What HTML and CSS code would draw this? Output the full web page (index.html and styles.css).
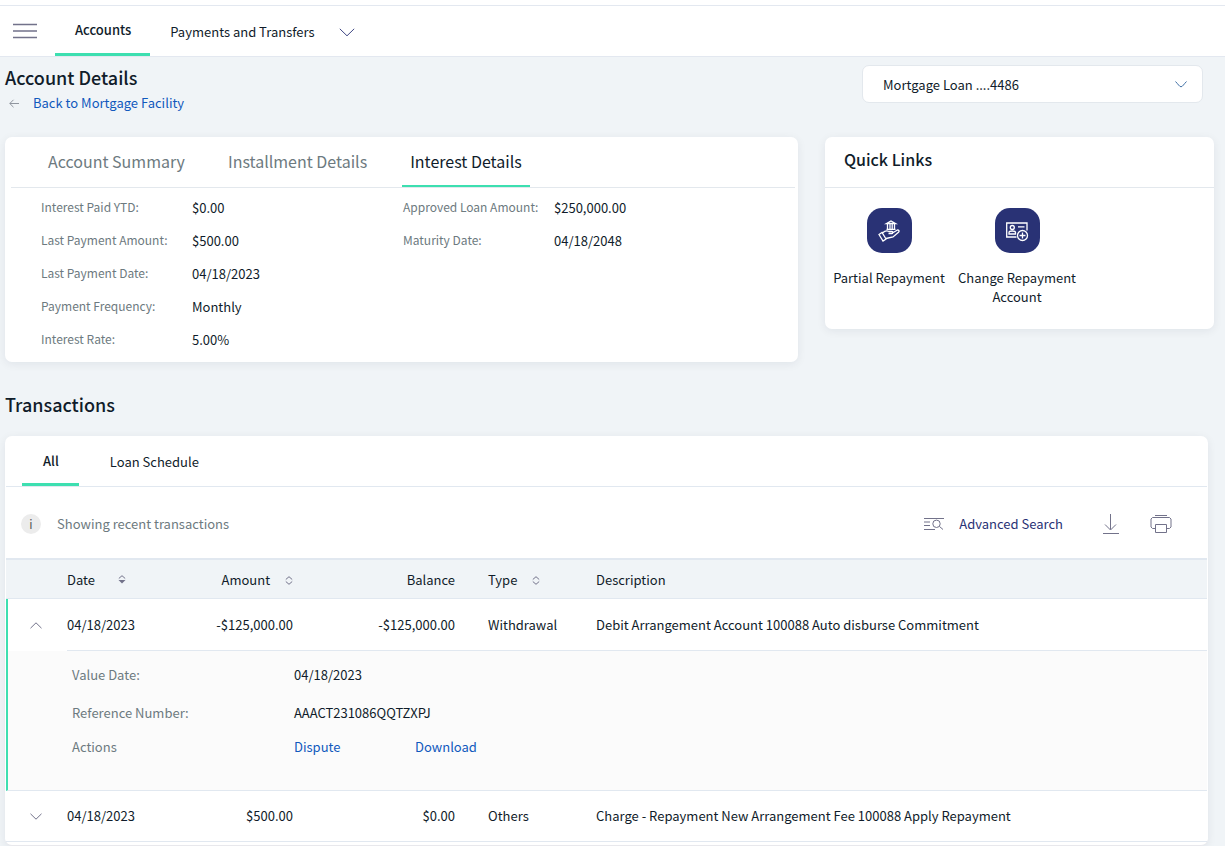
FILE: index.html
```html
<!DOCTYPE html>
<html lang="en">
<head>
    <meta charset="UTF-8">
    <meta name="viewport" content="width=device-width, initial-scale=1">
    <title>Account Details</title>
    <link rel="stylesheet" href="styles.css">
</head>
<body>
<header class="topbar">
    <button type="button" class="menu-btn" aria-label="Menu">
        <svg width="24" height="16" viewBox="0 0 24 16"><path d="M0 1.5h24M0 8h24M0 14.5h24"/></svg>
    </button>
    <nav class="main-nav">
        <a href="#" class="nav-item active">Accounts</a>
        <a href="#" class="nav-item">Payments and Transfers
            <svg width="16" height="9" viewBox="0 0 16 9"><path d="M.8.8L8 7.800 15.200.8"/></svg>
        </a>
    </nav>
</header>

<main class="page">
    <div class="page-head">
        <div>
            <h1>Account Details</h1>
            <a href="#" class="back">
                <svg width="10" height="9" viewBox="0 0 10 9"><path d="M10 4.500H.8M4.500.8L.8 4.500l3.700 3.700"/></svg>
                Back to Mortgage Facility
            </a>
        </div>
        <div class="account-select">
            <select aria-label="Account">
                <option>Mortgage Loan ....4486</option>
            </select>
            <svg width="12" height="7" viewBox="0 0 12 7"><path d="M.5.5C3 3 4.500 5.800 6 5.800S9 3 11.500.5"/></svg>
        </div>
    </div>

    <div class="top-cards">
        <section class="card">
            <div class="detail-tabs">
                <button type="button">Account Summary</button>
                <button type="button">Installment Details</button>
                <button type="button" class="active">Interest Details</button>
            </div>
            <div class="details">
                <dl>
                    <dt>Interest Paid YTD:</dt><dd>$0.00</dd>
                    <dt>Last Payment Amount:</dt><dd>$500.00</dd>
                    <dt>Last Payment Date:</dt><dd>04/18/2023</dd>
                    <dt>Payment Frequency:</dt><dd>Monthly</dd>
                    <dt>Interest Rate:</dt><dd>5.00%</dd>
                </dl>
                <dl>
                    <dt>Approved Loan Amount:</dt><dd>$250,000.00</dd>
                    <dt>Maturity Date:</dt><dd>04/18/2048</dd>
                </dl>
            </div>
        </section>

        <aside class="card quick">
            <h2>Quick Links</h2>
            <div class="quick-items">
                <a href="#">
                    <span class="tile">
                        <svg width="22" height="22" viewBox="0 0 22 22">
                            <path d="M8.500 3.500L13 1l4.500 2.500zM9.500 4v5M12 4v5M14.200 4v5M16.500 4v5M8.500 9.300h9"/>
                            <path d="M1 14.500l3-2 4 6.500-3 2zM4.500 13c2.500-2.500 4.500-2.700 6.500-1.500h3c1.200.2 1 2-.2 2H10.500M14.500 13l4.500-2.800c1.500-.7 2.700.8 1.500 2L15 17l-7 1.500"/>
                        </svg>
                    </span>
                    Partial Repayment
                </a>
                <a href="#">
                    <span class="tile">
                        <svg width="24" height="22" viewBox="0 0 24 22">
                            <path d="M11.500 17H1.700V3H22v7.500M13 6.800h6.500"/>
                            <circle cx="7.300" cy="7.500" r="2"/>
                            <path d="M4 14v-1.500c0-2 6.500-2 6.500 0V14z"/>
                            <circle cx="17.500" cy="15.500" r="5"/>
                            <path d="M17.500 12.500v6M14.500 15.500h6"/>
                        </svg>
                    </span>
                    Change Repayment Account
                </a>
            </div>
        </aside>
    </div>

    <h2 class="section-title">Transactions</h2>

    <section class="card transactions">
        <div class="tx-tabs">
            <button type="button" class="active">All</button>
            <button type="button">Loan Schedule</button>
        </div>
        <div class="toolbar">
            <span class="info">i</span>
            <span class="hint">Showing recent transactions</span>
            <a href="#" class="adv">
                <svg width="20" height="14" viewBox="0 0 20 14">
                    <path d="M0 1.500h20M0 5h6M0 8.500h6M0 12.500h11M15.500 9.500l3.500 3"/>
                    <circle cx="12.500" cy="6.800" r="3.700"/>
                </svg>
                Advanced Search
            </a>
            <button type="button" aria-label="Download">
                <svg width="16" height="20" viewBox="0 0 16 20"><path d="M7.500 0v15.500M2 10.500l5.500 5.500 5.500-5.500M0 19.500h16"/></svg>
            </button>
            <button type="button" aria-label="Print">
                <svg width="22" height="20" viewBox="0 0 22 20">
                    <path d="M5 1.500h12M5.500 14.500h-3l-1.500-1.500V5l1.500-1.500h17L21 5v8l-1.500 1.500h-3M5.500 10.500h11v8h-11z"/>
                </svg>
            </button>
        </div>

        <table>
            <colgroup>
                <col class="c-toggle"><col class="c-date"><col class="c-amount"><col class="c-balance"><col class="c-type"><col>
            </colgroup>
            <thead>
                <tr>
                    <th></th>
                    <th>Date <svg class="sort sorted" width="8" height="9" viewBox="0 0 8 9"><path d="M.8 3.500L4 .7l3.200 2.800"/><path class="fill" d="M.5 5h7L4 8.500z"/></svg></th>
                    <th class="num">Amount <svg class="sort" width="8" height="9" viewBox="0 0 8 9"><path d="M.8 3.500L4 .7l3.200 2.800M.8 5.500L4 8.300l3.200-2.800"/></svg></th>
                    <th class="num">Balance</th>
                    <th class="type">Type <svg class="sort" width="8" height="9" viewBox="0 0 8 9"><path d="M.8 3.500L4 .7l3.200 2.800M.8 5.500L4 8.300l3.200-2.800"/></svg></th>
                    <th>Description</th>
                </tr>
            </thead>
            <tbody>
                <tr class="row open">
                    <td class="toggle"><button type="button" aria-label="Collapse"><svg width="12" height="7" viewBox="0 0 12 7"><path d="M.5 6.200L6 .8l5.500 5.400"/></svg></button></td>
                    <td>04/18/2023</td>
                    <td class="num">-$125,000.00</td>
                    <td class="num">-$125,000.00</td>
                    <td class="type">Withdrawal</td>
                    <td>Debit Arrangement Account 100088 Auto disburse Commitment</td>
                </tr>
                <tr class="expanded">
                    <td colspan="6">
                        <dl>
                            <dt>Value Date:</dt><dd>04/18/2023</dd>
                            <dt>Reference Number:</dt><dd>AAACT231086QQTZXPJ</dd>
                            <dt>Actions</dt><dd class="actions"><a href="#">Dispute</a><a href="#">Download</a></dd>
                        </dl>
                    </td>
                </tr>
                <tr class="row">
                    <td class="toggle"><button type="button" aria-label="Expand"><svg width="12" height="7" viewBox="0 0 12 7"><path d="M.5.8L6 6.200 11.500.8"/></svg></button></td>
                    <td>04/18/2023</td>
                    <td class="num">$500.00</td>
                    <td class="num">$0.00</td>
                    <td class="type">Others</td>
                    <td>Charge - Repayment New Arrangement Fee 100088 Apply Repayment</td>
                </tr>
            </tbody>
        </table>
    </section>
</main>
</body>
</html>
```
FILE: styles.css
```css
* {
    box-sizing: border-box;
}
body {
    margin: 0;
    background: #f0f4f7;
    color: #101c2a;
    font-family: "Noto Sans CJK SC", "Open Sans", sans-serif;
    font-size: 13px;
    line-height: 20px;
}
h1, h2, dl, dd {
    margin: 0;
}
a {
    color: #1059bd;
    text-decoration: none;
}
button {
    padding: 0;
    border: 0;
    background: none;
    color: inherit;
    font: inherit;
    cursor: pointer;
}
svg {
    display: block;
    fill: none;
    stroke: #72728a;
    stroke-width: 1;
}

/* top navigation */
.topbar {
    display: flex;
    height: 57px;
    padding: 5px 0 0 13px;
    background: linear-gradient(#e3e8f0, #e3e8f0) 0 5px / 100% 1px no-repeat #fff;
    border-bottom: 1px solid #e3e8f0;
}
.menu-btn svg {
    stroke-width: 1.5;
}
.main-nav {
    display: flex;
    margin-left: 18px;
}
.nav-item {
    display: flex;
    align-items: center;
    gap: 24px;
    padding: 3px 20px 0;
    color: #101c2a;
}
.nav-item.active {
    padding: 2px 19px 0 20px;
    border-bottom: 3px solid #3ddfb0;
    font-weight: 500;
}
.nav-item svg {
    stroke: #3f4784;
}

/* page head */
.page {
    padding: 0 11px 0 5px;
}
.page-head {
    display: flex;
    justify-content: space-between;
    height: 80px;
    padding: 8px 11px 0 0;
}
h1, .section-title {
    font-size: 18px;
    font-weight: 500;
    line-height: 28px;
}
h1 {
    padding-bottom: 3px;
    line-height: 25px;
}
.back {
    display: flex;
    align-items: center;
    gap: 14px;
    padding-left: 4px;
}
.back svg {
    stroke: #8f959e;
}
.account-select {
    display: flex;
    align-items: center;
    align-self: flex-start;
    width: 341px;
}
.account-select select {
    appearance: none;
    flex: 1;
    height: 38px;
    padding: 1px 40px 0 20px;
    border: 1px solid #e3e8ed;
    border-radius: 7px;
    background: #fff;
    color: #101c2a;
    font: inherit;
}
.account-select svg {
    margin: 0 16px 0 -28px;
    stroke: #3f6fa5;
    pointer-events: none;
}

/* cards */
.card {
    border-radius: 7px;
    background: #fff;
    box-shadow: 0 2px 10px rgba(20, 30, 60, 0.07);
}
.top-cards {
    display: grid;
    grid-template-columns: 793fr 389fr;
    gap: 27px;
    align-items: start;
}
.detail-tabs {
    display: flex;
    gap: 27px;
    height: 51px;
    margin: 0 3px 0 6px;
    padding-left: 29px;
    border-bottom: 1px solid #e3e8ed;
    color: #6d7a80;
    font-size: 16px;
}
.detail-tabs button {
    padding: 0 8px;
    border-bottom: 2px solid transparent;
}
.detail-tabs .active {
    border-color: #3ddfb0;
    color: #101c2a;
}
.details {
    display: grid;
    grid-template-columns: 1fr 1fr;
    padding: 3px 33px 6px 36px;
}
.details dl {
    display: grid;
    grid-template-columns: 151px 1fr;
    align-content: start;
}
.details dt {
    padding-bottom: 2px;
    color: #6d7a80;
    font-size: 12px;
    line-height: 31px;
}
.details dd {
    padding-top: 1px;
    line-height: 32px;
}

/* quick links */
.quick h2 {
    height: 51px;
    padding-left: 19px;
    border-bottom: 1px solid #e3e8ed;
    font-size: 16px;
    font-weight: 500;
    line-height: 44px;
}
.quick-items {
    display: flex;
    padding: 20px 0 23px;
}
.quick-items a {
    display: flex;
    flex-direction: column;
    align-items: center;
    gap: 15px;
    width: 128px;
    color: #101c2a;
    line-height: 19px;
    text-align: center;
}
.tile {
    display: flex;
    align-items: center;
    justify-content: center;
    width: 45px;
    height: 45px;
    border-radius: 15px;
    background: #293275;
}
.tile svg {
    stroke: #fff;
    stroke-width: 1.3;
}

/* transactions */
.section-title {
    margin: 28px 0 18px;
}
.transactions {
    margin-right: 6px;
    padding: 0 1px 3px;
    border-bottom: 1px solid #e8e8ec;
}
.tx-tabs {
    display: flex;
    gap: 11px;
    height: 51px;
    padding-left: 16px;
    border-bottom: 1px solid #e1e8f0;
}
.tx-tabs button {
    padding: 1px 20px 0;
}
.tx-tabs .active {
    padding: 3px 20px 0 21px;
    border-bottom: 3px solid #3ddfb0;
    font-weight: 500;
}
.toolbar {
    display: flex;
    align-items: center;
    height: 71px;
    padding: 3px 35px 0 15px;
}
.info {
    width: 20px;
    height: 20px;
    border-radius: 50%;
    background: #ececec;
    color: #555;
    font-size: 12px;
    text-align: center;
}
.hint {
    margin-left: 16px;
    color: #6d7a80;
}
.adv {
    display: flex;
    align-items: center;
    gap: 15px;
    margin-left: auto;
    color: #293275;
}
.toolbar button {
    margin-left: 40px;
}
.toolbar button + button {
    margin-left: 31px;
}
table {
    width: 100%;
    border-collapse: separate;
    border-spacing: 0;
    table-layout: fixed;
}
.c-toggle {
    width: 61px;
}
.c-date {
    width: 120px;
}
.c-amount {
    width: 106px;
}
.c-balance {
    width: 162px;
}
.c-type {
    width: 141px;
}
th, td {
    padding: 0;
    text-align: left;
}
th {
    height: 41px;
    padding-top: 1px;
    border-top: 2px solid #e1e8f0;
    border-bottom: 1px solid #e1e8f0;
    background: #f0f4f7;
    font-weight: 400;
}
.num {
    text-align: right;
}
.type {
    padding-left: 33px;
}
.sort {
    display: inline-block;
    margin-left: 12px;
}
.sorted {
    margin-left: 20px;
    vertical-align: 1px;
}
.sort .fill {
    fill: #72728a;
    stroke: none;
}
.row td {
    height: 51px;
    border-bottom: 1px solid #e1e8f0;
}
.row.open td {
    height: 52px;
}
.row.open .toggle {
    border-bottom-color: #fff;
}
.open .toggle, .expanded td {
    border-left: 2px solid #3ddfb0;
}
.row.open .toggle {
    border-bottom: 0;
}
.toggle button {
    display: block;
    padding: 8px 24px;
}
.open .toggle button {
    padding-left: 22px;
}
.expanded td {
    padding: 6px 64px 29px;
    border-bottom: 1px solid #e1e8f0;
    background: #fbfbfb;
}
.expanded dl {
    display: grid;
    grid-template-columns: 222px 1fr;
    grid-template-rows: 36px 40px 28px;
    align-items: center;
}
.expanded dt {
    color: #6d7a80;
}
.actions {
    display: grid;
    grid-template-columns: 121px 1fr;
}
```
